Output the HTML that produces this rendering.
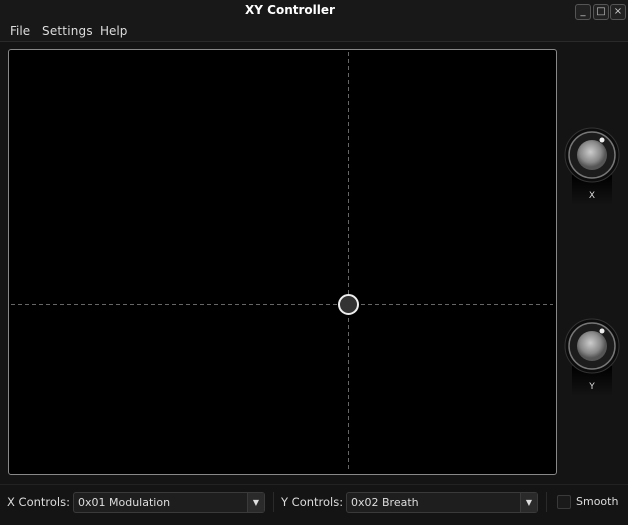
<!DOCTYPE html>
<html><head><style>
body{margin:0;width:628px;height:525px;background:#141414;font-family:"DejaVu Sans","Liberation Sans",sans-serif;color:#ddd;position:relative;overflow:hidden;font-size:12px}
.a{position:absolute}
.btn{position:absolute;top:4px;width:14px;height:14px;border:1px solid #555;border-radius:3px;background:#222;color:#ccc;font-size:10px;line-height:14px;text-align:center}
.combo{position:absolute;top:492px;height:21px;border:1px solid #3a3a3a;border-radius:3px;background:#1e1e1e;font-size:11px;line-height:19px;padding-left:4px;box-sizing:border-box}
.combo .dd{position:absolute;right:0;top:0;width:16px;height:19px;border-left:1px solid #3a3a3a;background:#2a2a2a;text-align:center;font-size:8px;line-height:19px}
</style></head><body>
<div class="a" style="left:0;top:0;width:628px;height:42px;background:#181818"></div>
<div class="a" style="left:0;top:3px;width:580px;text-align:center;font-weight:bold;font-size:12px;color:#fff">XY Controller</div>
<div class="btn" style="left:575px">_</div><div class="btn" style="left:593px">□</div><div class="btn" style="left:610px">×</div>
<div class="a" style="left:10px;top:24px;font-size:12px">File</div>
<div class="a" style="left:42px;top:24px;font-size:12px;letter-spacing:0.2px">Settings</div>
<div class="a" style="left:100px;top:24px;font-size:12px">Help</div>
<div class="a" style="left:0;top:41px;width:628px;height:1px;background:#2a2a2a"></div>
<div class="a" style="left:8px;top:49px;width:547px;height:424px;background:#000;border:1px solid #888;border-radius:3px"></div>
<svg class="a" style="left:0;top:0" width="628" height="525">
<defs>
<radialGradient id="g" cx="45%" cy="40%"><stop offset="0" stop-color="#ccc"/><stop offset="0.7" stop-color="#888"/><stop offset="1" stop-color="#555"/></radialGradient>
<linearGradient id="p" x1="0" y1="0" x2="0" y2="1"><stop offset="0" stop-color="#000"/><stop offset="1" stop-color="#141414"/></linearGradient>
</defs>
<line x1="348.5" y1="52" x2="348.5" y2="472" stroke="#666" stroke-dasharray="4,3"/>
<line x1="11" y1="304.5" x2="553" y2="304.5" stroke="#666" stroke-dasharray="4,3"/>
<circle cx="348.5" cy="304.5" r="9.5" fill="#333" stroke="#eee" stroke-width="2"/>
<g>
<rect x="572" y="175" width="40" height="30" fill="url(#p)"/>
<circle cx="592" cy="155" r="27" fill="#0c0c0c" stroke="#333"/>
<circle cx="592" cy="155" r="23" fill="#1c1c1c" stroke="#777" stroke-width="1.5"/>
<circle cx="592" cy="155" r="15" fill="url(#g)"/>
<circle cx="602" cy="140" r="2.5" fill="#eee"/>
<text x="592" y="198" fill="#ddd" font-size="9" text-anchor="middle">X</text>
</g>
<g>
<rect x="572" y="366" width="40" height="30" fill="url(#p)"/>
<circle cx="592" cy="346" r="27" fill="#0c0c0c" stroke="#333"/>
<circle cx="592" cy="346" r="23" fill="#1c1c1c" stroke="#777" stroke-width="1.5"/>
<circle cx="592" cy="346" r="15" fill="url(#g)"/>
<circle cx="602" cy="331" r="2.5" fill="#eee"/>
<text x="592" y="389" fill="#ddd" font-size="9" text-anchor="middle">Y</text>
</g>
</svg>
<div class="a" style="left:0;top:484px;width:628px;height:1px;background:#222"></div>
<div class="a" style="left:7px;top:495px;font-size:11.5px">X Controls:</div>
<div class="combo" style="left:73px;width:192px">0x01 Modulation<div class="dd">▼</div></div>
<div class="a" style="left:273px;top:492px;width:1px;height:20px;background:#2a2a2a"></div>
<div class="a" style="left:281px;top:495px;font-size:11.5px">Y Controls:</div>
<div class="combo" style="left:346px;width:192px">0x02 Breath<div class="dd">▼</div></div>
<div class="a" style="left:546px;top:492px;width:1px;height:20px;background:#2a2a2a"></div>
<div class="a" style="left:557px;top:495px;width:12px;height:12px;border:1px solid #3a3a3a;border-radius:2px;background:#1a1a1a"></div>
<div class="a" style="left:576px;top:495px;font-size:11px">Smooth</div>
</body></html>
